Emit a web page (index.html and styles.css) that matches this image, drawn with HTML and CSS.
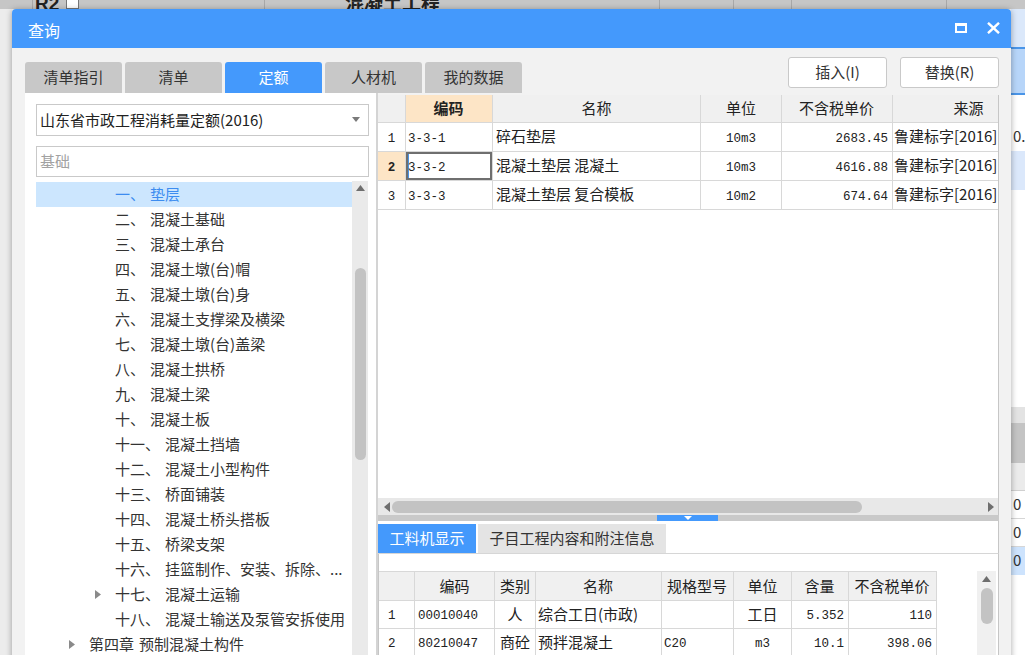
FILE: index.html
```html
<!DOCTYPE html>
<html lang="zh-CN">
<head>
<meta charset="utf-8">
<title>查询</title>
<link rel="stylesheet" href="styles.css">
</head>
<body>
<div class="app">
  <div class="app-top">
    <div class="cell c1"></div>
    <div class="cell c2"><span class="cap">R2</span><span class="minus"></span></div>
    <div class="cell c3"><span class="cap">混凝土工程</span></div>
    <div class="cell c4"></div>
    <div class="cell c5"></div>
    <div class="cell c6"></div>
    <div class="cell c7"></div>
  </div>
  <div class="app-body">
    <div class="gutter"></div>
    <div class="canvas"></div>
    <div class="side">
      <div class="s s-a"></div>
      <div class="s s-line"></div>
      <div class="s s-b"></div>
      <div class="s s-line"></div>
      <div class="s s-w1"></div>
      <div class="s s-row">0.</div>
      <div class="s s-lb"></div>
      <div class="s s-w2"></div>
      <div class="s s-g1"></div>
      <div class="s s-g2"></div>
      <div class="s s-g3"></div>
      <div class="s s-row bordered">0</div>
      <div class="s s-row bordered">0</div>
      <div class="s s-row s-sel">0</div>
      <div class="s s-rest"></div>
    </div>
  </div>
</div>

<div class="dialog">
  <div class="titlebar">
    <span class="title">查询</span>
    <div class="win-btns">
      <svg class="ico-max" width="12" height="10" viewBox="0 0 12 10"><rect x="1" y="1.5" width="10" height="7.5" fill="none" stroke="#fff" stroke-width="2"/><rect x="0" y="0" width="12" height="3" fill="#fff"/></svg>
      <svg class="ico-close" width="13" height="12" viewBox="0 0 13 12"><path d="M1 0.8 L12 11.2 M12 0.8 L1 11.2" stroke="#fff" stroke-width="2.4" fill="none"/></svg>
    </div>
  </div>
  <div class="dlg-body">
    <div class="toolbar">
      <div class="tabs">
        <div class="tab">清单指引</div>
        <div class="tab">清单</div>
        <div class="tab active">定额</div>
        <div class="tab">人材机</div>
        <div class="tab">我的数据</div>
      </div>
      <div class="actions">
        <button class="btn">插入(I)</button>
        <button class="btn">替换(R)</button>
      </div>
    </div>
    <div class="main">
      <div class="left">
        <div class="select">
          <span>山东省市政工程消耗量定额(2016)</span>
          <svg class="caret" width="8" height="5" viewBox="0 0 8 5"><polygon points="0,0 8,0 4,5" fill="#7a7a7a"/></svg>
        </div>
        <div class="search">基础</div>
        <div class="tree">
          <div class="tree-list">
            <div class="node lv2 sel"><span class="tw"></span><span class="pre">一、</span><span>垫层</span></div>
            <div class="node lv2"><span class="tw"></span><span class="pre">二、</span><span>混凝土基础</span></div>
            <div class="node lv2"><span class="tw"></span><span class="pre">三、</span><span>混凝土承台</span></div>
            <div class="node lv2"><span class="tw"></span><span class="pre">四、</span><span>混凝土墩(台)帽</span></div>
            <div class="node lv2"><span class="tw"></span><span class="pre">五、</span><span>混凝土墩(台)身</span></div>
            <div class="node lv2"><span class="tw"></span><span class="pre">六、</span><span>混凝土支撑梁及横梁</span></div>
            <div class="node lv2"><span class="tw"></span><span class="pre">七、</span><span>混凝土墩(台)盖梁</span></div>
            <div class="node lv2"><span class="tw"></span><span class="pre">八、</span><span>混凝土拱桥</span></div>
            <div class="node lv2"><span class="tw"></span><span class="pre">九、</span><span>混凝土梁</span></div>
            <div class="node lv2"><span class="tw"></span><span class="pre">十、</span><span>混凝土板</span></div>
            <div class="node lv2"><span class="tw"></span><span class="pre">十一、</span><span>混凝土挡墙</span></div>
            <div class="node lv2"><span class="tw"></span><span class="pre">十二、</span><span>混凝土小型构件</span></div>
            <div class="node lv2"><span class="tw"></span><span class="pre">十三、</span><span>桥面铺装</span></div>
            <div class="node lv2"><span class="tw"></span><span class="pre">十四、</span><span>混凝土桥头搭板</span></div>
            <div class="node lv2"><span class="tw"></span><span class="pre">十五、</span><span>桥梁支架</span></div>
            <div class="node lv2"><span class="tw"></span><span class="pre">十六、</span><span>挂篮制作、安装、拆除、...</span></div>
            <div class="node lv2"><span class="tw"><svg width="6" height="9" viewBox="0 0 6 9"><polygon points="0,0 6,4.5 0,9" fill="#8a8a8a"/></svg></span><span class="pre">十七、</span><span>混凝土运输</span></div>
            <div class="node lv2"><span class="tw"></span><span class="pre">十八、</span><span>混凝土输送及泵管安拆使用</span></div>
            <div class="node lv1"><span class="tw"><svg width="6" height="9" viewBox="0 0 6 9"><polygon points="0,0 6,4.5 0,9" fill="#8a8a8a"/></svg></span><span class="pre">第四章</span><span>预制混凝土构件</span></div>
          </div>
          <div class="vscroll">
            <svg class="up" width="9" height="6" viewBox="0 0 9 6"><polygon points="0,6 9,6 4.5,0" fill="#6e6e6e"/></svg>
            <div class="thumb"></div>
          </div>
        </div>
      </div>
      <div class="split"></div>
      <div class="right">
        <div class="grid-top">
          <div class="trow head">
            <div class="tc w-rn"></div>
            <div class="tc w-code hl ac bold">编码</div>
            <div class="tc w-name ac">名称</div>
            <div class="tc w-unit ac">单位</div>
            <div class="tc w-price ac">不含税单价</div>
            <div class="tc w-src ac">来源</div>
          </div>
          <div class="trow">
            <div class="tc w-rn ac"><span class="mono">1</span></div>
            <div class="tc w-code"><span class="mono">3-3-1</span></div>
            <div class="tc w-name">碎石垫层</div>
            <div class="tc w-unit ac"><span class="mono">10m3</span></div>
            <div class="tc w-price ar"><span class="mono">2683.45</span></div>
            <div class="tc w-src">鲁建标字[2016]</div>
          </div>
          <div class="trow">
            <div class="tc w-rn ac hl"><span class="mono bold">2</span></div>
            <div class="tc w-code cur"><span class="mono">3-3-2</span></div>
            <div class="tc w-name">混凝土垫层 混凝土</div>
            <div class="tc w-unit ac"><span class="mono">10m3</span></div>
            <div class="tc w-price ar"><span class="mono">4616.88</span></div>
            <div class="tc w-src">鲁建标字[2016]</div>
          </div>
          <div class="trow">
            <div class="tc w-rn ac"><span class="mono">3</span></div>
            <div class="tc w-code"><span class="mono">3-3-3</span></div>
            <div class="tc w-name">混凝土垫层 复合模板</div>
            <div class="tc w-unit ac"><span class="mono">10m2</span></div>
            <div class="tc w-price ar"><span class="mono">674.64</span></div>
            <div class="tc w-src">鲁建标字[2016]</div>
          </div>
        </div>
        <div class="hscroll">
          <svg class="arr-l" width="6" height="10" viewBox="0 0 6 10"><polygon points="6,0 6,10 0,5" fill="#6e6e6e"/></svg>
          <div class="hthumb"></div>
          <svg class="arr-r" width="6" height="10" viewBox="0 0 6 10"><polygon points="0,0 0,10 6,5" fill="#6e6e6e"/></svg>
        </div>
        <div class="hsplit"><div class="grip"><svg width="8" height="4" viewBox="0 0 8 4"><polygon points="0,0 8,0 4,4" fill="#fff"/></svg></div></div>
        <div class="subtabs">
          <div class="stab active">工料机显示</div>
          <div class="stab">子目工程内容和附注信息</div>
        </div>
        <div class="subpanel">
          <div class="subtable">
            <div class="trow head">
              <div class="tc b-rn"></div>
              <div class="tc b-code ac">编码</div>
              <div class="tc b-type ac">类别</div>
              <div class="tc b-name ac">名称</div>
              <div class="tc b-spec ac">规格型号</div>
              <div class="tc b-unit ac">单位</div>
              <div class="tc b-qty ac">含量</div>
              <div class="tc b-price ac">不含税单价</div>
            </div>
            <div class="trow">
              <div class="tc b-rn"><span class="mono">1</span></div>
              <div class="tc b-code"><span class="mono">00010040</span></div>
              <div class="tc b-type ac">人</div>
              <div class="tc b-name">综合工日(市政)</div>
              <div class="tc b-spec"></div>
              <div class="tc b-unit ac">工日</div>
              <div class="tc b-qty ar"><span class="mono">5.352</span></div>
              <div class="tc b-price ar"><span class="mono">110</span></div>
            </div>
            <div class="trow">
              <div class="tc b-rn"><span class="mono">2</span></div>
              <div class="tc b-code"><span class="mono">80210047</span></div>
              <div class="tc b-type ac">商砼</div>
              <div class="tc b-name">预拌混凝土</div>
              <div class="tc b-spec"><span class="mono">C20</span></div>
              <div class="tc b-unit ac"><span class="mono">m3</span></div>
              <div class="tc b-qty ar"><span class="mono">10.1</span></div>
              <div class="tc b-price ar"><span class="mono">398.06</span></div>
            </div>
          </div>
          <div class="vscroll2">
            <svg class="up" width="9" height="6" viewBox="0 0 9 6"><polygon points="0,6 9,6 4.5,0" fill="#6e6e6e"/></svg>
            <div class="thumb2"></div>
          </div>
        </div>
      </div>
    </div>
  </div>
</div>
</body>
</html>
```

FILE: styles.css
```css
* { box-sizing: border-box; }
html, body { margin: 0; padding: 0; }
body {
  width: 1025px;
  height: 655px;
  overflow: hidden;
  position: relative;
  font-family: "Noto Sans CJK SC", "Microsoft YaHei", sans-serif;
  font-size: 15px;
  color: #333;
  background: #ececec;
}

/* ---------- background application ---------- */
.app { display: flex; flex-direction: column; height: 655px; }
.app-top {
  height: 9px;
  flex: none;
  display: flex;
  background: #c6c6c6;
  overflow: hidden;
}
.app-top .cell {
  height: 9px;
  flex: none;
  display: flex;
  align-items: flex-end;
  overflow: hidden;
  border-right: 1px solid #a8a8a8;
}
.c1 { width: 33px; }
.c2 { width: 232px; padding-left: 2px; }
.c3 { width: 395px; padding-left: 80px; }
.c4 { width: 74px; }
.c5 { width: 58px; }
.c6 { width: 155px; }
.c7 { flex: 1 !important; border-right: none !important; }
.cap {
  font-family: "Liberation Sans", "Noto Sans CJK SC", sans-serif;
  font-size: 19px;
  line-height: 19px;
  font-weight: bold;
  color: #222;
  margin-bottom: -4px;
  white-space: nowrap;
}
.minus {
  width: 13px;
  height: 9px;
  margin-left: 7px;
  background: #fff;
  border: 1px solid #777;
  border-top: none;
}
.app-body { flex: 1; display: flex; }
.gutter { width: 12px; background: #ececec; }
.canvas { flex: 1; background: #f4f4f4; }
.side { width: 14px; display: flex; flex-direction: column; background: #fff; }
.s { flex: none; }
.s-a { height: 38px; background: #dbe8fa; }
.s-line { height: 2px; background: #4a95e8; }
.s-b { height: 44px; background: #b7d5f9; }
.s-w1 { height: 28px; background: #fff; }
.s-row {
  height: 28px;
  line-height: 26px;
  padding-left: 2px;
  font-size: 15px;
  color: #333;
  background: #fff;
}
.s-row.bordered { border-bottom: 1px solid #d6d6d6; }
.s-lb { height: 39px; background: #dbe8fb; }
.s-w2 { height: 217px; background: #fff; }
.s-g1 { height: 16px; background: #e3e3e3; }
.s-g2 { height: 40px; background: #c4c4c4; }
.s-g3 { height: 28px; background: #ebebeb; border-bottom: 1px solid #d0d0d0; }
.s-sel { background: #cde3fd; }
.s-rest { flex: 1; background: #fff; }

/* ---------- dialog ---------- */
.dialog {
  position: absolute;
  left: 12px;
  top: 9px;
  width: 999px;
  height: 660px;
  background: #f2f2f2;
  border-radius: 4px 4px 0 0;
  box-shadow: 0 1px 6px rgba(0, 0, 0, 0.35);
  overflow: hidden;
  display: flex;
  flex-direction: column;
}
.titlebar {
  height: 39px;
  flex: none;
  background: #4499fc;
  display: flex;
  align-items: center;
  justify-content: space-between;
  padding: 3px 11px 0 16px;
}
.title { color: #fff; font-size: 16px; line-height: 20px; }
.win-btns { display: flex; align-items: center; gap: 20px; margin-top: -4px; }
.ico-max, .ico-close { display: block; }

.dlg-body {
  flex: 1;
  display: flex;
  flex-direction: column;
  padding: 9px 12px 0 13px;
  min-height: 0;
}
.toolbar { height: 36px; flex: none; display: flex; justify-content: space-between; }
.tabs { display: flex; gap: 3px; align-self: flex-end; }
.tab {
  width: 97px;
  height: 31px;
  padding-bottom: 2px;
  background: #c8c8c8;
  border-radius: 3px 3px 0 0;
  color: #333;
  font-size: 15px;
  display: flex;
  align-items: center;
  justify-content: center;
}
.tab.active { background: #4499fc; color: #fff; }
.actions { display: flex; gap: 13px; align-self: flex-start; }
.btn {
  width: 99px;
  height: 31px;
  background: #fff;
  border: 1px solid #c9c9c9;
  border-radius: 3px;
  font-family: "Noto Sans CJK SC", sans-serif;
  font-size: 15px;
  color: #333;
  padding: 0 0 2px;
}

.main { flex: 1; display: flex; min-height: 0; }

/* left panel */
.left {
  width: 351px;
  flex: none;
  background: #fff;
  padding: 11px 7px 0 11px;
  display: flex;
  flex-direction: column;
}
.select {
  height: 32px;
  flex: none;
  border: 1px solid #c9c9c9;
  display: flex;
  align-items: center;
  justify-content: space-between;
  padding: 0 8px 2px 3px;
  font-size: 15px;
  color: #222;
}
.caret { display: block; margin-top: 0; }
.search {
  height: 31px;
  flex: none;
  margin-top: 10px;
  border: 1px solid #c9c9c9;
  display: flex;
  align-items: center;
  padding: 0 0 2px 3px;
  color: #a2a2a2;
  font-size: 15px;
}
.tree { margin-top: 4px; flex: 1; display: flex; min-height: 0; }
.tree-list { width: 316px; flex: none; padding-top: 1px; overflow: hidden; }
.node {
  height: 25px;
  display: flex;
  align-items: center;
  padding-bottom: 2px;
  white-space: nowrap;
  font-size: 15px;
  color: #333;
}
.node.lv2 { padding-left: 59px; }
.node.lv1 { padding-left: 33px; }
.node.sel { background: #cce6fe; color: #3c8cf0; }
.tw { width: 20px; flex: none; display: flex; align-items: center; padding-top: 2px; }
.tw svg { display: block; }
.pre { margin-right: 5px; }
.vscroll {
  width: 16px;
  flex: none;
  background: #eaeaea;
  display: flex;
  flex-direction: column;
  align-items: center;
}
.vscroll .up { display: block; margin-top: 4px; }
.thumb {
  width: 11px;
  height: 192px;
  margin-top: 77px;
  background: #c3c3c3;
  border-radius: 6px;
}

.split { width: 2px; flex: none; background: #d4d4d4; }

/* right panel */
.right {
  width: 621px;
  flex: none;
  padding-top: 2px;
  display: flex;
  flex-direction: column;
}
.grid-top {
  height: 403px;
  flex: none;
  background: #fff;
  overflow: hidden;
  border-right: 1px solid #c6c6c6;
}
.trow {
  display: flex;
  height: 29px;
  border-bottom: 1px solid #d8d8d8;
}
.grid-top .trow { width: 669px; }
.trow.head { height: 28px; background: #f0f0f0; }
.tc {
  flex: none;
  height: 100%;
  display: flex;
  align-items: center;
  border-right: 1px solid #d8d8d8;
  padding: 0 3px 3px;
  white-space: nowrap;
  overflow: hidden;
  font-size: 15px;
  color: #222;
}
.head .tc { padding-bottom: 2px; }
.tc.ac { justify-content: center; }
.tc.ar { justify-content: flex-end; }
.tc.hl { background: #fde5c6; }
.tc.bold, .mono.bold { font-weight: bold; }
.tc.cur { box-shadow: inset 0 0 0 2px #6f6f6f, inset 1px 0 0 2px #4a95e8; padding-left: 2px; }
.mono {
  font-family: "Liberation Mono", "DejaVu Sans Mono", monospace;
  font-size: 12.5px;
  color: #222;
  margin-top: 6px;
}
.w-rn { width: 28px; }
.w-code { width: 87px; padding-left: 2px; }
.w-name { width: 208px; padding-left: 3px; }
.w-unit { width: 81px; }
.w-price { width: 111px; padding-right: 4px; }
.w-src { width: 154px; padding-left: 1px; }

.hscroll {
  height: 17px;
  flex: none;
  background: #e8e8e8;
  display: flex;
  align-items: center;
  padding-left: 6px;
  border-right: 1px solid #c6c6c6;
}
.arr-l, .arr-r { display: block; flex: none; }
.hthumb {
  width: 470px;
  height: 12px;
  margin-left: 2px;
  background: #c3c3c3;
  border-radius: 6px;
}
.arr-r { margin-left: 126px; }

.hsplit {
  height: 6px;
  flex: none;
  background: #c9c9c9;
  display: flex;
}
.grip {
  width: 61px;
  height: 6px;
  margin-left: 279px;
  background: #4499fc;
  display: flex;
  justify-content: center;
  align-items: center;
}
.grip svg { display: block; }

.subtabs {
  height: 33px;
  flex: none;
  background: #fff;
  display: flex;
  gap: 2px;
  padding-top: 3px;
  border-bottom: 1px solid #d6d6d6;
  border-right: 1px solid #c6c6c6;
}
.stab {
  height: 29px;
  width: 188px;
  padding: 0 0 2px;
  background: #e4e4e4;
  display: flex;
  align-items: center;
  justify-content: center;
  white-space: nowrap;
  font-size: 15px;
  color: #333;
}
.stab.active { width: 98px; background: #4499fc; color: #fff; }

.subpanel {
  flex: 1;
  background: #fff;
  border-left: 1px solid #c6c6c6;
  border-right: 1px solid #c6c6c6;
  padding-top: 17px;
  display: flex;
  justify-content: space-between;
}
.subtable { width: 558px; border-top: 1px solid #d8d8d8; align-self: flex-start; }
.subtable .trow { width: 558px; height: 28px; }
.subtable .trow.head { height: 29px; }
.b-rn { width: 36px; padding-left: 9px; }
.b-code { width: 80px; padding-left: 3px; }
.b-type { width: 41px; }
.b-name { width: 126px; padding-left: 2px; }
.b-spec { width: 72px; padding-left: 2px; }
.b-unit { width: 58px; }
.b-qty { width: 57px; padding-right: 4px; }
.b-price { width: 88px; padding-right: 4px; }

.vscroll2 {
  width: 19px;
  margin-right: 2px;
  background: #f0f0f0;
  display: flex;
  flex-direction: column;
  align-items: center;
}
.vscroll2 .up { display: block; margin-top: 5px; }
.thumb2 {
  width: 12px;
  height: 36px;
  margin-top: 6px;
  background: #c3c3c3;
  border-radius: 6px;
}
```
